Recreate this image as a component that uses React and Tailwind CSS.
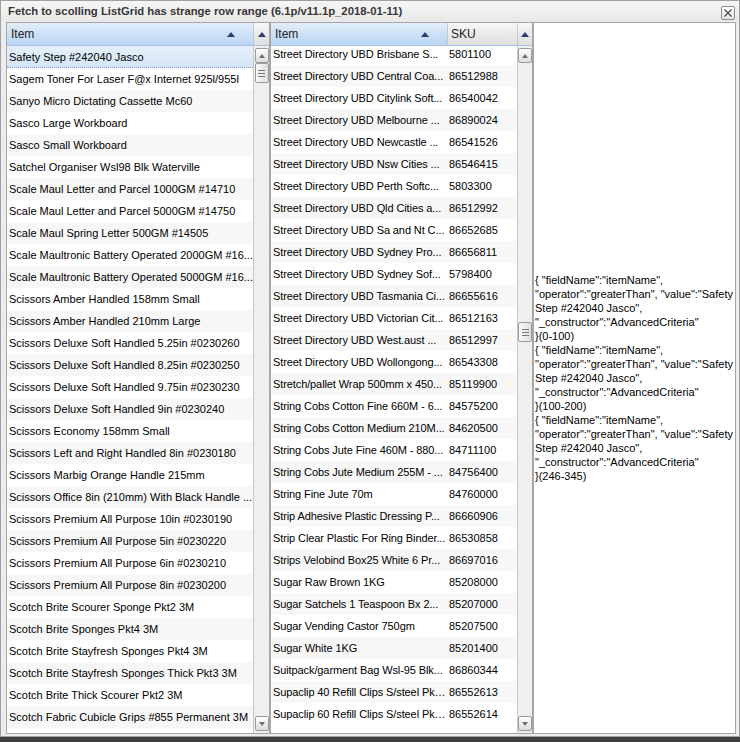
import React from "react";

const leftRows = [
  "Safety Step #242040 Jasco",
  "Sagem Toner For Laser F@x Internet 925l/955l",
  "Sanyo Micro Dictating Cassette Mc60",
  "Sasco Large Workboard",
  "Sasco Small Workboard",
  "Satchel Organiser Wsl98 Blk Waterville",
  "Scale Maul Letter and Parcel 1000GM #14710",
  "Scale Maul Letter and Parcel 5000GM #14750",
  "Scale Maul Spring Letter 500GM #14505",
  "Scale Maultronic Battery Operated 2000GM #16...",
  "Scale Maultronic Battery Operated 5000GM #16...",
  "Scissors Amber Handled 158mm Small",
  "Scissors Amber Handled 210mm Large",
  "Scissors Deluxe Soft Handled 5.25in #0230260",
  "Scissors Deluxe Soft Handled 8.25in #0230250",
  "Scissors Deluxe Soft Handled 9.75in #0230230",
  "Scissors Deluxe Soft Handled 9in #0230240",
  "Scissors Economy 158mm Small",
  "Scissors Left and Right Handled 8in #0230180",
  "Scissors Marbig Orange Handle 215mm",
  "Scissors Office 8in (210mm) With Black Handle ...",
  "Scissors Premium All Purpose 10in #0230190",
  "Scissors Premium All Purpose 5in #0230220",
  "Scissors Premium All Purpose 6in #0230210",
  "Scissors Premium All Purpose 8in #0230200",
  "Scotch Brite Scourer Sponge Pkt2 3M",
  "Scotch Brite Sponges Pkt4 3M",
  "Scotch Brite Stayfresh Sponges Pkt4 3M",
  "Scotch Brite Stayfresh Sponges Thick Pkt3 3M",
  "Scotch Brite Thick Scourer Pkt2 3M",
  "Scotch Fabric Cubicle Grips #855 Permanent 3M",
];

const rightRows = [
  ["Street Directory UBD Brisbane S...", "5801100"],
  ["Street Directory UBD Central Coa...", "86512988"],
  ["Street Directory UBD Citylink Soft...", "86540042"],
  ["Street Directory UBD Melbourne ...", "86890024"],
  ["Street Directory UBD Newcastle ...", "86541526"],
  ["Street Directory UBD Nsw Cities ...", "86546415"],
  ["Street Directory UBD Perth Softc...", "5803300"],
  ["Street Directory UBD Qld Cities a...", "86512992"],
  ["Street Directory UBD Sa and Nt C...", "86652685"],
  ["Street Directory UBD Sydney Pro...", "86656811"],
  ["Street Directory UBD Sydney Sof...", "5798400"],
  ["Street Directory UBD Tasmania Ci...", "86655616"],
  ["Street Directory UBD Victorian Cit...", "86512163"],
  ["Street Directory UBD West.aust ...", "86512997"],
  ["Street Directory UBD Wollongong...", "86543308"],
  ["Stretch/pallet Wrap 500mm x 450...", "85119900"],
  ["String Cobs Cotton Fine 660M - 6...", "84575200"],
  ["String Cobs Cotton Medium 210M...", "84620500"],
  ["String Cobs Jute Fine 460M - 880...", "84711100"],
  ["String Cobs Jute Medium 255M - ...", "84756400"],
  ["String Fine Jute 70m", "84760000"],
  ["Strip Adhesive Plastic Dressing P...", "86660906"],
  ["Strip Clear Plastic For Ring Binder...", "86530858"],
  ["Strips Velobind Box25 White 6 Pr...", "86697016"],
  ["Sugar Raw Brown 1KG", "85208000"],
  ["Sugar Satchels 1 Teaspoon Bx 2...", "85207000"],
  ["Sugar Vending Castor 750gm", "85207500"],
  ["Sugar White 1KG", "85201400"],
  ["Suitpack/garment Bag Wsl-95 Blk...", "86860344"],
  ["Supaclip 40 Refill Clips S/steel Pkt...", "86552613"],
  ["Supaclip 60 Refill Clips S/steel Pkt...", "86552614"],
];

const criteria = ["(0-100)", "(100-200)", "(246-345)"];

const SortArrow = () => (
  <svg width="8" height="5" viewBox="0 0 8 5">
    <path d="M0 5 L4 0 L8 5 Z" fill="#2c3e6e" />
  </svg>
);

// small scrollbar end button
const ScrollButton = ({ down }) => (
  <div className="w-[14px] h-[15px] mx-auto border border-[#9a9a9a] rounded-[2px] bg-gradient-to-b from-[#ffffff] to-[#dcdcdc] flex items-center justify-center">
    <svg width="6" height="4" viewBox="0 0 6 4">
      <path d={down ? "M0 0 L3 4 L6 0 Z" : "M0 4 L3 0 L6 4 Z"} fill="#707070" />
    </svg>
  </div>
);

const Thumb = ({ className = "" }) => (
  <div className={`w-[14px] h-[20px] mx-auto border border-[#9a9a9a] rounded-[2px] bg-gradient-to-r from-[#fafafa] to-[#dedede] flex flex-col items-center justify-center gap-[2px] ${className}`}>
    <div className="w-[7px] h-px bg-[#777]" />
    <div className="w-[7px] h-px bg-[#777]" />
    <div className="w-[7px] h-px bg-[#777]" />
  </div>
);

const ScrollTrack = ({ thumbOffset }) => (
  <div className="flex-1 flex flex-col bg-[#efefef] border-l border-[#c8c8c8] pt-[2px] pb-[2px]">
    <ScrollButton />
    <Thumb className={thumbOffset} />
    <div className="flex-1" />
    <ScrollButton down />
  </div>
);

const headerBlue = "bg-gradient-to-b from-[#e3eefb] to-[#b9d4f4]";
const headerGray = "bg-gradient-to-b from-[#f7f7f7] to-[#dedede]";

export default function App() {
  return (
    <div className="w-[740px] h-[742px] bg-[#404040] overflow-hidden" style={{ fontFamily: '"Liberation Sans", Arial, sans-serif' }}>
      <div className="h-[737px] border border-[#a0a0a0] bg-[#ececec] flex flex-col">
        {/* title bar */}
        <div className="h-[21px] flex items-center justify-between pl-[7px] pr-[4px] bg-gradient-to-b from-[#f6f6f6] to-[#e8e8e8]">
          <span className="text-[11.3px] font-bold text-[#383838] whitespace-nowrap">
            Fetch to scolling ListGrid has strange row range (6.1p/v11.1p_2018-01-11)
          </span>
          <div className="w-[14px] h-[14px] mt-[2px] border border-[#8c8c8c] rounded-[2px] bg-gradient-to-b from-[#ffffff] to-[#e4e4e4] flex items-center justify-center">
            <svg width="8" height="8" viewBox="0 0 8 8">
              <path d="M0.5 0.5 L7.5 7.5 M7.5 0.5 L0.5 7.5" stroke="#444" strokeWidth="1.1" />
            </svg>
          </div>
        </div>

        <div className="flex pl-[5px]">
          {/* first grid */}
          <div className="w-[264px] h-[712px] border border-[#a6a6a6] bg-white flex flex-col">
            <div className="h-[23px] flex border-b border-[#a9c3e2]">
              <div className={`w-[246px] flex items-center justify-between pl-[4px] pr-[18px] text-[12px] text-[#222] ${headerBlue}`}>
                <span>Item</span>
                <SortArrow />
              </div>
              <div className={`flex-1 flex items-center justify-center border-l border-[#c8c8c8] ${headerGray}`}>
                <SortArrow />
              </div>
            </div>
            <div className="flex-1 flex overflow-hidden">
              <div className="w-[246px] overflow-hidden">
                {leftRows.map((name, i) => (
                  <div
                    key={name}
                    className={`h-[22px] flex items-center pl-[2px] pt-px text-[11px] text-black whitespace-nowrap overflow-hidden ${
                      i === 0
                        ? "bg-gradient-to-b from-[#e6f0fb] to-[#d4e5f8] border-b border-dotted border-[#6fa3e0]"
                        : i % 2 === 0
                        ? "bg-[#f7f7f7]"
                        : "bg-white"
                    }`}
                  >
                    {name}
                  </div>
                ))}
              </div>
              <ScrollTrack thumbOffset="" />
            </div>
          </div>

          {/* second grid */}
          <div className="w-[263px] h-[712px] border border-[#a6a6a6] bg-white flex flex-col">
            <div className="h-[23px] flex border-b border-[#a9c3e2]">
              <div className={`w-[176px] flex items-center justify-between pl-[4px] pr-[18px] text-[12px] text-[#222] ${headerBlue}`}>
                <span>Item</span>
                <SortArrow />
              </div>
              <div className={`w-[70px] flex items-center pl-[3px] text-[12px] text-[#222] border-l border-[#c8c8c8] ${headerGray}`}>
                SKU
              </div>
              <div className={`flex-1 flex items-center justify-center border-l border-[#c8c8c8] ${headerGray}`}>
                <SortArrow />
              </div>
            </div>
            <div className="flex-1 flex overflow-hidden">
              <div className="w-[246px] overflow-hidden">
                <div className="mt-[-3px]">
                  {rightRows.map(([name, sku], i) => (
                    <div
                      key={sku}
                      className={`h-[22px] flex items-center text-[11px] text-black whitespace-nowrap ${
                        i % 2 === 1 ? "bg-[#f7f7f7]" : "bg-white"
                      }`}
                    >
                      <div className="w-[176px] pl-[2px] pr-px truncate tracking-[-0.1px]">{name}</div>
                      <div className="w-[70px] pl-[2px]">{sku}</div>
                    </div>
                  ))}
                </div>
              </div>
              <ScrollTrack thumbOffset="mt-[259px]" />
            </div>
          </div>

          {/* log panel */}
          <div className="w-[203px] h-[712px] border border-[#a6a6a6] bg-white flex flex-col justify-center">
            <div className="text-[11px] leading-[14px] text-black pl-px whitespace-nowrap">
              {criteria.map((range) => (
                <div key={range}>
                  <div>{'{ "fieldName":"itemName",'}</div>
                  <div>{'"operator":"greaterThan", "value":"Safety'}</div>
                  <div>{'Step #242040 Jasco",'}</div>
                  <div>{'"_constructor":"AdvancedCriteria"'}</div>
                  <div>{"}" + range}</div>
                </div>
              ))}
            </div>
          </div>
        </div>
      </div>
    </div>
  );
}
